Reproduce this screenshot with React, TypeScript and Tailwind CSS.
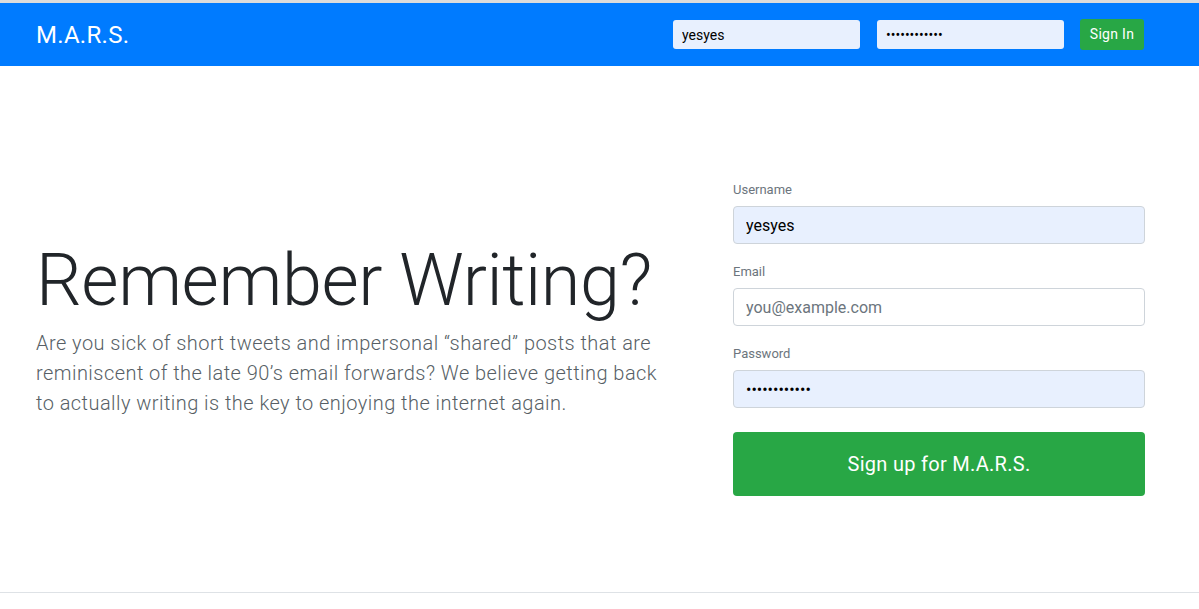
export default function App() {
  return (
    <div className="min-h-[609px] bg-white font-['Roboto','Liberation_Sans',sans-serif] text-[#212529]">
      <header className="border-t-[3px] border-[#dcdcdc] bg-[#007bff]">
        <div className="flex h-[63px] items-center justify-between pl-[36px] pr-[55px]">
          <a className="text-[24px] leading-none tracking-[0.3px] text-white">M.A.R.S.</a>
          <form className="flex items-center">
            <input
              defaultValue="yesyes"
              className="h-[29px] w-[187px] rounded-[3px] bg-[#e8f0fe] px-[9px] text-[14px] text-black outline-none"
            />
            <input
              type="password"
              defaultValue="yesyesyesyes"
              className="ml-[17px] h-[29px] w-[187px] rounded-[3px] bg-[#e8f0fe] px-[9px] text-[14px] text-black outline-none"
            />
            <button className="ml-[16px] h-[31px] w-[64px] rounded-[3px] bg-[#28a745] text-[14px] tracking-[0.3px] text-white">
              Sign In
            </button>
          </form>
        </div>
      </header>

      <main className="flex h-[527px] items-start border-b border-[#dee2e6] pl-[36px] pr-[54px]">
        <div className="w-[640px] pt-[172px]">
          <h1 className="text-[72px] font-light leading-[1.2] tracking-[-0.4px]">Remember Writing?</h1>
          <p className="mt-[4px] text-[20px] font-light leading-[30px] tracking-[0.45px] text-[#575f66]">
            Are you sick of short tweets and impersonal “shared” posts that are reminiscent of the late 90’s email
            forwards? We believe getting back to actually writing is the key to enjoying the internet again.
          </p>
        </div>
        <form className="ml-auto flex w-[412px] flex-col pt-[116px]">
          <label className="text-[13px] leading-[16px] text-[#6c757d]">Username</label>
          <input
            defaultValue="yesyes"
            className="mt-[8px] h-[38px] rounded-[4px] border border-[#ced4da] bg-[#e8f0fe] px-[12px] text-[16px] text-black outline-none"
          />
          <label className="mt-[20px] text-[13px] leading-[16px] text-[#6c757d]">Email</label>
          <input
            placeholder="you@example.com"
            className="mt-[8px] h-[38px] rounded-[4px] border border-[#ced4da] bg-white px-[12px] text-[16px] text-black outline-none placeholder:text-[#6c757d]"
          />
          <label className="mt-[20px] text-[13px] leading-[16px] text-[#6c757d]">Password</label>
          <input
            type="password"
            defaultValue="yesyesyesyes"
            className="mt-[8px] h-[38px] rounded-[4px] border border-[#ced4da] bg-[#e8f0fe] px-[12px] text-[16px] text-black outline-none"
          />
          <button className="mt-[24px] h-[64px] rounded-[4px] bg-[#28a745] text-[20px] tracking-[0.3px] text-white">
            Sign up for M.A.R.S.
          </button>
        </form>
      </main>
    </div>
  )
}
